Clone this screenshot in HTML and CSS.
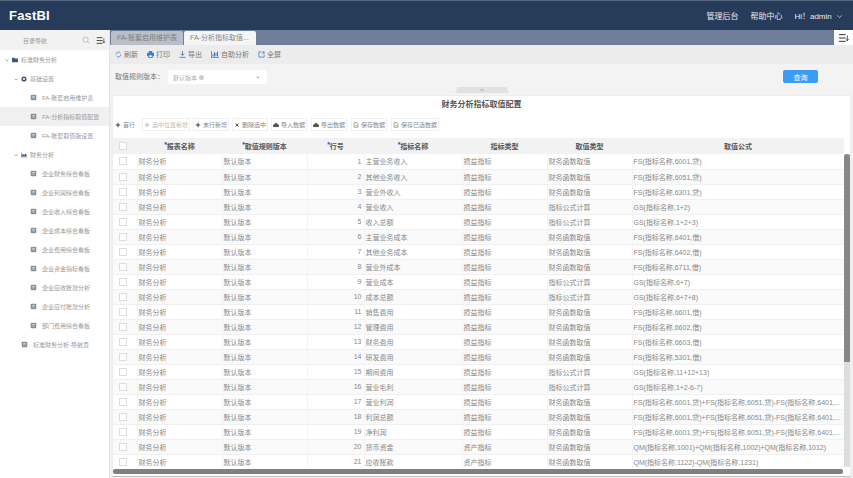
FILE: index.html
```html
<!DOCTYPE html>
<html lang="zh-CN">
<head>
    <meta charset="UTF-8">
    <title>FastBI</title>
    <link rel="stylesheet" href="styles.css">
</head>
<body>
<svg class="defs" width="0" height="0">
    <symbol id="i-page" viewBox="0 0 10 10"><path d="M2 1h6l1 1v6l-1 1H2L1 8V2z" fill="#8a8f94"/><path d="M3 3.500h4M3 5.500h4" stroke="#e8e8e8" stroke-width=".9"/></symbol>
    <symbol id="i-arrow" viewBox="0 0 6 6"><path d="M1.500 2.500L3 4l1.500-1.500" fill="none" stroke="#999" stroke-width=".8"/></symbol>
    <symbol id="i-menu" viewBox="0 0 14 12"><path d="M1 2h8M1 6h8M1 10h8" stroke="#333" stroke-width="1.200"/><path d="M11 3v6M9.500 7.500L11 9.500l1.500-2" fill="none" stroke="#333" stroke-width="1"/></symbol>
    <symbol id="i-plus" viewBox="0 0 8 8"><path d="M4 1v6M1 4h6" stroke="currentColor" stroke-width="1.400"/></symbol>
    <symbol id="i-cloud" viewBox="0 0 8 8"><path d="M1 6.500a1.500 1.500 0 0 1 .4-3A2.600 2.600 0 0 1 6.300 3 1.800 1.800 0 0 1 7 6.500z" fill="#555"/></symbol>
    <symbol id="i-save" viewBox="0 0 8 8"><path d="M1.500 1h4l1 1v5h-5z" fill="none" stroke="#666" stroke-width=".8"/><path d="M3 4.500h2" stroke="#666" stroke-width=".8"/></symbol>
</svg>

<header class="topbar">
    <div class="logo">FastBI</div>
    <nav class="topnav">
        <a>管理后台</a>
        <a>帮助中心</a>
        <a class="user">Hi！admin
            <svg width="7" height="7" viewBox="0 0 6 6"><path d="M1 2l2 2 2-2" fill="none" stroke="#dfe5ee" stroke-width=".6"/></svg>
        </a>
    </nav>
</header>

<div class="layout">
    <aside class="sidebar">
        <div class="side-head">
            <span class="side-title">目录导航</span>
            <svg width="8" height="8" viewBox="0 0 8 8"><circle cx="3.600" cy="3.600" r="2.600" fill="none" stroke="#aaa" stroke-width=".7"/><path d="M5.500 5.500L7.400 7.400" stroke="#aaa" stroke-width=".7"/></svg>
            <svg width="10" height="9"><use href="#i-menu"/></svg>
        </div>
        <ul class="tree">
            <li class="lv1">
                <svg class="arrow"><use href="#i-arrow"/></svg>
                <svg width="6" height="6" viewBox="0 0 8 8"><path d="M0 1h3l1 1h4v5H0z" fill="#3d5a78"/></svg>
                <span>标准财务分析</span>
            </li>
            <li class="lv2">
                <svg class="arrow"><use href="#i-arrow"/></svg>
                <svg width="6" height="6" viewBox="0 0 8 8"><circle cx="4" cy="4" r="2.400" fill="none" stroke="#3d5a78" stroke-width="2"/></svg>
                <span>基础设置</span>
            </li>
            <li class="lv3"><svg class="page"><use href="#i-page"/></svg>FA-账套启用维护表</li>
            <li class="lv3 on"><svg class="page"><use href="#i-page"/></svg>FA-分析指标取值配置</li>
            <li class="lv3"><svg class="page"><use href="#i-page"/></svg>FA-账套取值版设置</li>
            <li class="lv2">
                <svg class="arrow"><use href="#i-arrow"/></svg>
                <svg width="6" height="6" viewBox="0 0 8 8"><path d="M0 7V1h.8v5.200H8V7z M1.500 5.500V4L3 2.500 4.500 4 6 2l1.500 1.500v2z" fill="#3d5a78"/></svg>
                <span>财务分析</span>
            </li>
            <li class="lv3"><svg class="page"><use href="#i-page"/></svg>企业财务综合看板</li>
            <li class="lv3"><svg class="page"><use href="#i-page"/></svg>企业利润综合看板</li>
            <li class="lv3"><svg class="page"><use href="#i-page"/></svg>企业收入综合看板</li>
            <li class="lv3"><svg class="page"><use href="#i-page"/></svg>企业成本综合看板</li>
            <li class="lv3"><svg class="page"><use href="#i-page"/></svg>企业费用综合看板</li>
            <li class="lv3"><svg class="page"><use href="#i-page"/></svg>企业资金指标看板</li>
            <li class="lv3"><svg class="page"><use href="#i-page"/></svg>企业应收账款分析</li>
            <li class="lv3"><svg class="page"><use href="#i-page"/></svg>企业应付账款分析</li>
            <li class="lv3"><svg class="page"><use href="#i-page"/></svg>部门费用综合看板</li>
            <li class="lv2b"><svg class="page"><use href="#i-page"/></svg>标准财务分析-导航页</li>
        </ul>
    </aside>

    <main class="main">
        <div class="tabbar">
            <div class="tabs">
                <span class="tab">FA-账套启用维护表</span>
                <span class="tab active">FA-分析指标取值...</span>
            </div>
            <div class="tab-menu"><svg width="12" height="10"><use href="#i-menu"/></svg></div>
        </div>

        <div class="toolbar">
            <a><svg width="7" height="7" viewBox="0 0 8 8"><path d="M1.200 4a2.800 2.800 0 0 1 5-1.700M6.800 4a2.800 2.800 0 0 1-5 1.700" fill="none" stroke="#3f7fd0" stroke-width=".9"/></svg>刷新</a>
            <a><svg width="7" height="7" viewBox="0 0 8 8"><path d="M2 0h4v2h2v4H6.500v2h-5V6H0V2h2z" fill="#3f7fd0"/><path d="M2.500 5h3v2h-3z" fill="#fff"/></svg>打印</a>
            <a><svg width="7" height="7" viewBox="0 0 8 8"><path d="M4 0v5M2 3l2 2 2-2M.5 7.200h7" fill="none" stroke="#3f7fd0" stroke-width="1"/></svg>导出</a>
            <a><svg width="8" height="8" viewBox="0 0 8 8"><path d="M0 8V1h.8v6.200H8V8zM1.500 6.500V4h1v2.500zM3 6.500V2h1v4.500zM4.500 6.500V3h1v3.500zM6 6.500V1.500h1v5z" fill="#3f7fd0"/></svg>自助分析</a>
            <a><svg width="7" height="7" viewBox="0 0 8 8"><path d="M4 1H1v6h6V4M5 1h2v2M7 1L4.500 3.500" fill="none" stroke="#3f7fd0" stroke-width=".9"/></svg>全屏</a>
        </div>

        <div class="query">
            <label class="query-label">取值规则版本：</label>
            <div class="select">
                <span class="select-val">默认版本</span><i class="clear"></i>
                <svg class="select-arrow" width="6" height="6"><use href="#i-arrow"/></svg>
            </div>
            <button class="btn-query">查询</button>
            <div class="collapse">
                <svg width="6" height="4" viewBox="0 0 6 4"><path d="M1 3l2-2 2 2" fill="none" stroke="#999" stroke-width=".7"/></svg>
            </div>
        </div>

        <section class="panel">
            <h2 class="panel-title">财务分析指标取值配置</h2>
            <div class="actions">
                <a><svg><use href="#i-plus"/></svg>首行</a>
                <a class="box off"><svg><use href="#i-plus"/></svg>选中位置新增</a>
                <a class="box"><svg><use href="#i-plus"/></svg>末行新增</a>
                <a class="box"><svg viewBox="0 0 8 8"><path d="M2 2l4 4M6 2L2 6" stroke="#444" stroke-width="1.200"/></svg>删除选中</a>
                <a class="box"><svg><use href="#i-cloud"/></svg>导入数据</a>
                <a class="box"><svg><use href="#i-cloud"/></svg>导出数据</a>
                <a class="box"><svg><use href="#i-save"/></svg>保存数据</a>
                <a class="box"><svg><use href="#i-save"/></svg>保存已选数据</a>
            </div>

            <div class="grid-wrap">
                <table class="grid">
                    <colgroup>
                        <col class="c-check"><col class="c-a"><col class="c-b"><col class="c-c">
                        <col class="c-d"><col class="c-e"><col class="c-f"><col>
                    </colgroup>
                    <thead>
                    <tr>
                        <th><i class="check"></i></th>
                        <th><b>*</b>报表名称</th>
                        <th><b>*</b>取值规则版本</th>
                        <th><b>*</b>行号</th>
                        <th><b>*</b>指标名称</th>
                        <th>指标类型</th>
                        <th>取值类型</th>
                        <th>取值公式</th>
                    </tr>
                    </thead>
                    <tbody>
                    <tr><td><i class="check"></i></td><td>财务分析</td><td>默认版本</td><td class="num">1</td><td>主营业务收入</td><td>损益指标</td><td>财务函数取值</td><td>FS(指标名称,6001,贷)</td></tr>
                    <tr><td><i class="check"></i></td><td>财务分析</td><td>默认版本</td><td class="num">2</td><td>其他业务收入</td><td>损益指标</td><td>财务函数取值</td><td>FS(指标名称,6051,贷)</td></tr>
                    <tr><td><i class="check"></i></td><td>财务分析</td><td>默认版本</td><td class="num">3</td><td>营业外收入</td><td>损益指标</td><td>财务函数取值</td><td>FS(指标名称,6301,贷)</td></tr>
                    <tr><td><i class="check"></i></td><td>财务分析</td><td>默认版本</td><td class="num">4</td><td>营业收入</td><td>损益指标</td><td>指标公式计算</td><td>GS(指标名称,1+2)</td></tr>
                    <tr><td><i class="check"></i></td><td>财务分析</td><td>默认版本</td><td class="num">5</td><td>收入总额</td><td>损益指标</td><td>指标公式计算</td><td>GS(指标名称,1+2+3)</td></tr>
                    <tr><td><i class="check"></i></td><td>财务分析</td><td>默认版本</td><td class="num">6</td><td>主营业务成本</td><td>损益指标</td><td>财务函数取值</td><td>FS(指标名称,6401,借)</td></tr>
                    <tr><td><i class="check"></i></td><td>财务分析</td><td>默认版本</td><td class="num">7</td><td>其他业务成本</td><td>损益指标</td><td>财务函数取值</td><td>FS(指标名称,6402,借)</td></tr>
                    <tr><td><i class="check"></i></td><td>财务分析</td><td>默认版本</td><td class="num">8</td><td>营业外成本</td><td>损益指标</td><td>财务函数取值</td><td>FS(指标名称,6711,借)</td></tr>
                    <tr><td><i class="check"></i></td><td>财务分析</td><td>默认版本</td><td class="num">9</td><td>营业成本</td><td>损益指标</td><td>指标公式计算</td><td>GS(指标名称,6+7)</td></tr>
                    <tr><td><i class="check"></i></td><td>财务分析</td><td>默认版本</td><td class="num">10</td><td>成本总额</td><td>损益指标</td><td>指标公式计算</td><td>GS(指标名称,6+7+8)</td></tr>
                    <tr><td><i class="check"></i></td><td>财务分析</td><td>默认版本</td><td class="num">11</td><td>销售费用</td><td>损益指标</td><td>财务函数取值</td><td>FS(指标名称,6601,借)</td></tr>
                    <tr><td><i class="check"></i></td><td>财务分析</td><td>默认版本</td><td class="num">12</td><td>管理费用</td><td>损益指标</td><td>财务函数取值</td><td>FS(指标名称,6602,借)</td></tr>
                    <tr><td><i class="check"></i></td><td>财务分析</td><td>默认版本</td><td class="num">13</td><td>财务费用</td><td>损益指标</td><td>财务函数取值</td><td>FS(指标名称,6603,借)</td></tr>
                    <tr><td><i class="check"></i></td><td>财务分析</td><td>默认版本</td><td class="num">14</td><td>研发费用</td><td>损益指标</td><td>财务函数取值</td><td>FS(指标名称,5301,借)</td></tr>
                    <tr><td><i class="check"></i></td><td>财务分析</td><td>默认版本</td><td class="num">15</td><td>期间费用</td><td>损益指标</td><td>指标公式计算</td><td>GS(指标名称,11+12+13)</td></tr>
                    <tr><td><i class="check"></i></td><td>财务分析</td><td>默认版本</td><td class="num">16</td><td>营业毛利</td><td>损益指标</td><td>指标公式计算</td><td>GS(指标名称,1+2-6-7)</td></tr>
                    <tr><td><i class="check"></i></td><td>财务分析</td><td>默认版本</td><td class="num">17</td><td>营业利润</td><td>损益指标</td><td>财务函数取值</td><td>FS(指标名称,6001,贷)+FS(指标名称,6051,贷)-FS(指标名称,6401,...</td></tr>
                    <tr><td><i class="check"></i></td><td>财务分析</td><td>默认版本</td><td class="num">18</td><td>利润总额</td><td>损益指标</td><td>财务函数取值</td><td>FS(指标名称,6001,贷)+FS(指标名称,6051,贷)-FS(指标名称,6401,...</td></tr>
                    <tr><td><i class="check"></i></td><td>财务分析</td><td>默认版本</td><td class="num">19</td><td>净利润</td><td>损益指标</td><td>财务函数取值</td><td>FS(指标名称,6001,贷)+FS(指标名称,6051,贷)-FS(指标名称,6401,...</td></tr>
                    <tr><td><i class="check"></i></td><td>财务分析</td><td>默认版本</td><td class="num">20</td><td>货币资金</td><td>资产指标</td><td>财务函数取值</td><td>QM(指标名称,1001)+QM(指标名称,1002)+QM(指标名称,1012)</td></tr>
                    <tr><td><i class="check"></i></td><td>财务分析</td><td>默认版本</td><td class="num">21</td><td>应收账款</td><td>资产指标</td><td>财务函数取值</td><td>QM(指标名称,1122)-QM(指标名称,1231)</td></tr>
                    </tbody>
                </table>
                <div class="vscroll"><div class="vscroll-thumb"></div></div>
            </div>
            <div class="hscroll"></div>
        </section>
    </main>
</div>
</body>
</html>
```

FILE: styles.css
```css
* {
    box-sizing: border-box;
}

html, body {
    margin: 0;
    padding: 0;
    height: 100%;
    overflow: hidden;
}

body {
    width: 853px;
    height: 478px;
    display: flex;
    flex-direction: column;
    background: #f0f0f0;
    color: #666;
    font-family: "Liberation Sans", "Noto Sans CJK SC", sans-serif;
    font-size: 7px;
}

.defs {
    position: absolute;
}

ul {
    margin: 0;
    padding: 0;
    list-style: none;
}

/* 顶部导航 */
.topbar {
    flex: none;
    height: 30px;
    display: flex;
    align-items: center;
    justify-content: space-between;
    padding: 0 10px 0 9px;
    background: #273b5b;
    border-top: 1px solid #55667f;
    color: #fff;
}

.logo {
    font-size: 13px;
    font-weight: bold;
    letter-spacing: .2px;
}

.topnav {
    display: flex;
    align-items: center;
    gap: 12px;
    font-size: 8px;
    color: #e6ebf2;
}

.user svg {
    margin-left: 2px;
    vertical-align: -1px;
}

.layout {
    flex: 1;
    display: flex;
    min-height: 0;
}

/* 左侧目录 */
.sidebar {
    flex: none;
    width: 110px;
    background: #fff;
    border-right: 1px solid #e4e4e4;
    font-size: 6px;
}

.side-head {
    height: 20px;
    display: flex;
    align-items: center;
    padding: 0 3px 0 23px;
    gap: 6px;
    background: #f2f2f2;
    color: #999;
}

.side-title {
    flex: 1;
}

.tree li {
    height: 19px;
    display: flex;
    align-items: center;
    color: #999;
    white-space: nowrap;
}

.tree .lv1 {
    padding-left: 4px;
}

.tree .lv2 {
    padding-left: 13px;
}

.tree .lv2b {
    padding-left: 21px;
}

.tree .lv3 {
    padding-left: 30px;
}

.tree .lv1 span, .tree .lv2 span {
    margin-left: 3px;
}

.tree .lv2b .page, .tree .lv3 .page {
    margin-right: 5px;
}

.tree .on {
    background: #f0f0f0;
}

.arrow {
    width: 6px;
    height: 6px;
    margin-right: 2px;
}

.page {
    width: 7px;
    height: 7px;
}

/* 页签 */
.main {
    flex: 1;
    min-width: 0;
    display: flex;
    flex-direction: column;
}

.tabbar {
    flex: none;
    height: 15px;
    display: flex;
    justify-content: space-between;
    background: #6f7f99;
}

.tabs {
    display: flex;
    align-items: flex-end;
    gap: 1px;
    padding-left: 1px;
}

.tab {
    height: 14px;
    width: 72px;
    padding-left: 6px;
    line-height: 14px;
    border-radius: 2px 2px 0 0;
    background: #b9bec8;
    color: #808080;
    white-space: nowrap;
}

.tab.active {
    background: #f5f5f5;
    color: #888;
}

.tab-menu {
    width: 19px;
    display: flex;
    align-items: center;
    justify-content: center;
    background: #fff;
}

.toolbar {
    flex: none;
    height: 19px;
    display: flex;
    align-items: center;
    gap: 9px;
    padding: 0 0 1px 5px;
    background: #ececec;
    color: #777;
}

.toolbar a {
    display: flex;
    align-items: center;
    gap: 2px;
}

.query {
    flex: none;
    height: 31px;
    position: relative;
    display: flex;
    align-items: flex-start;
    padding: 6px 0 0 5px;
    background: #f3f3f3;
    color: #777;
}

.query-label {
    width: 53px;
    height: 14px;
    line-height: 14px;
    white-space: nowrap;
}

.select {
    width: 99px;
    height: 14px;
    display: flex;
    align-items: center;
    padding-left: 5px;
    background: #fff;
    color: #aaa;
    border-radius: 2px;
}

.select-val {
    font-size: 6px;
}

.clear {
    width: 5px;
    height: 5px;
    margin-left: 2px;
    border-radius: 50%;
    background: #ccc;
}

.select-arrow {
    margin-left: auto;
    margin-right: 6px;
}

.btn-query {
    width: 35px;
    height: 13px;
    margin-left: auto;
    margin-right: 35px;
    padding: 0;
    border: 0;
    border-radius: 2px;
    background: #3d9bf5;
    color: #fff;
    font: inherit;
}

.collapse {
    position: absolute;
    left: 345px;
    bottom: 2px;
    width: 54px;
    height: 6px;
    display: flex;
    align-items: center;
    justify-content: center;
    background: #e2e2e2;
    clip-path: polygon(5% 0, 95% 0, 100% 100%, 0 100%);
}

/* 表格面板 */
.panel {
    flex: 1;
    min-height: 0;
    margin: 0 2px 1px 2px;
    background: #fff;
    border: 1px solid #eee;
    border-bottom: 1px solid #bbb;
    display: flex;
    flex-direction: column;
    overflow: hidden;
}

.panel-title {
    flex: none;
    margin: 0;
    height: 18px;
    line-height: 18px;
    text-align: center;
    font-size: 8px;
    font-weight: bold;
    color: #555;
}

.actions {
    flex: none;
    height: 24px;
    display: flex;
    align-items: center;
    gap: 3px;
    padding: 0 0 3px 1px;
    color: #888;
    font-size: 6px;
}

.actions a {
    height: 13px;
    display: flex;
    align-items: center;
    gap: 2px;
    padding: 0 1px;
    white-space: nowrap;
}

.actions a:first-child {
    padding-right: 4px;
}

.actions a:nth-last-child(-n+3) {
    margin-left: 1px;
}

.actions svg {
    width: 6px;
    height: 6px;
    color: #444;
}

.actions .box {
    border: 1px solid #f1f1f1;
}

.actions .off, .actions .off svg {
    color: #bbb;
}

.grid-wrap {
    flex: none;
    height: 331px;
    position: relative;
    overflow: hidden;
}

.grid {
    width: 731px;
    table-layout: fixed;
    border-collapse: collapse;
    color: #888;
}

.c-check {
    width: 24px;
}

.c-a, .c-b {
    width: 85px;
}

.c-c {
    width: 57px;
}

.c-d {
    width: 98px;
}

.c-e, .c-f {
    width: 85px;
}

.grid th {
    height: 16px;
    padding: 0;
    background: #f2f2f2;
    color: #555;
    font-size: 7px;
    font-weight: bold;
    text-align: center;
}

.grid th b {
    color: #2a3fd0;
    vertical-align: 2px;
}

.grid td {
    height: 15px;
    padding: 0 2px 0 1px;
    border-bottom: 1px solid #f0f0f0;
    border-left: 1px solid #f4f4f4;
    white-space: nowrap;
    overflow: hidden;
}

.grid td:first-child, .grid th:first-child {
    padding: 0 0 0 6px;
    text-align: left;
    border-left: 0;
}

.grid tbody tr:nth-child(even) td {
    background: #fafafa;
}

.grid .num {
    text-align: right;
}

.check {
    display: block;
    width: 8px;
    height: 8px;
    border: 1px solid #ddd;
    background: #fff;
}

.vscroll {
    position: absolute;
    top: 16px;
    right: 0;
    width: 6px;
    bottom: 2px;
    background: #ddd;
}

.vscroll-thumb {
    height: 208px;
    background: #888;
    border-radius: 3px 3px 0 0;
}

.hscroll {
    flex: none;
    height: 5px;
    margin: 0 7px 0 0;
    border-radius: 2px;
    background: #808080;
}
```
